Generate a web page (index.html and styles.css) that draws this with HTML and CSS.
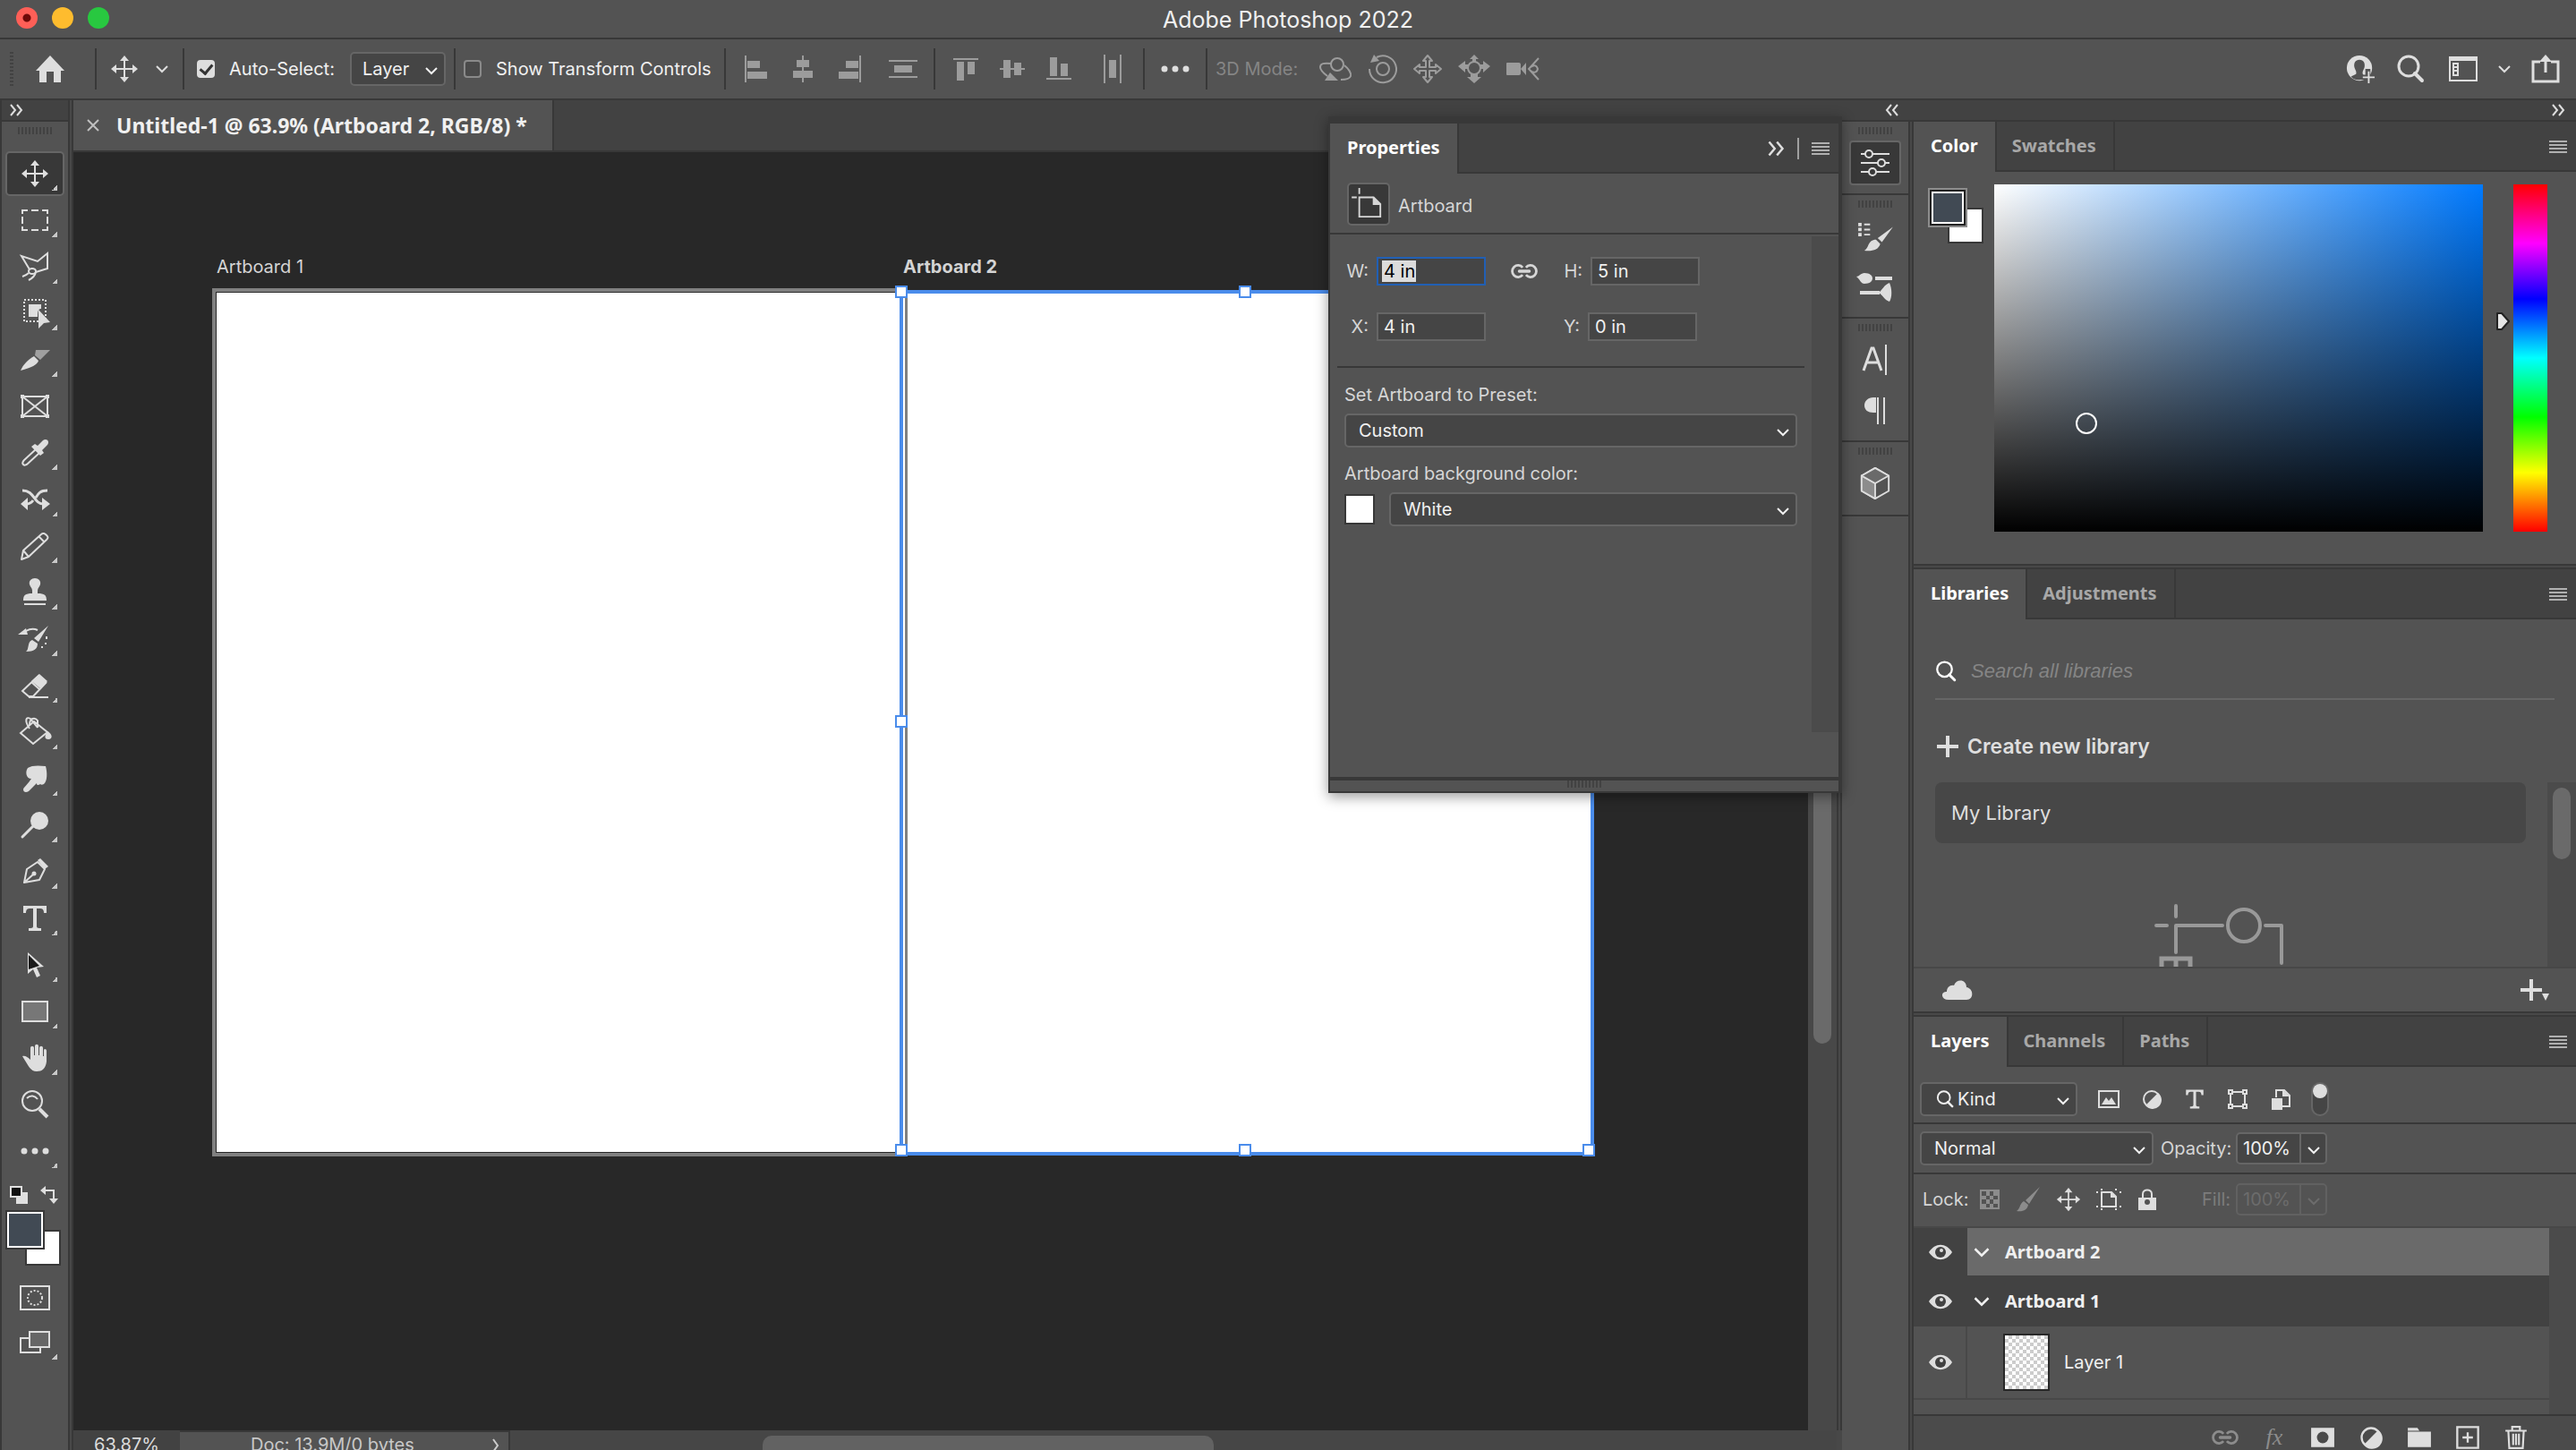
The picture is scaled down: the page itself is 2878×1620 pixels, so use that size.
FILE: index.html
```html
<!DOCTYPE html>
<html lang="en">
<head>
<meta charset="utf-8">
<title>Adobe Photoshop 2022</title>
<link rel="stylesheet" href="styles.css">
</head>
<body>
<svg class="sprite" aria-hidden="true">
  <symbol id="i-chevron" viewBox="0 0 16 16"><path d="M2 5l6 6 6-6" fill="none" stroke="currentColor" stroke-width="2"/></symbol>
  <symbol id="i-more" viewBox="0 0 16 16"><path d="M2 2l5 6-5 6M9 2l5 6-5 6" fill="none" stroke="currentColor" stroke-width="2"/></symbol>
  <symbol id="i-less" viewBox="0 0 16 16"><path d="M7 2L2 8l5 6M14 2L9 8l5 6" fill="none" stroke="currentColor" stroke-width="2"/></symbol>
  <symbol id="i-menu" viewBox="0 0 20 14"><path d="M0 1h20M0 5h20M0 9h20M0 13h20" stroke="currentColor" stroke-width="2"/></symbol>
  <symbol id="i-home" viewBox="0 0 36 32"><path d="M18 1L34 18h-4v13h-8V19h-8v12H6V18H2z" fill="currentColor"/></symbol>
  <symbol id="i-move" viewBox="0 0 32 32"><path d="M16 1l5 6h-4v8h8v-4l6 5-6 5v-4h-8v8h4l-5 6-5-6h4v-8H7v4l-6-5 6-5v4h8V7h-4z" fill="currentColor"/></symbol>
  <symbol id="i-dots" viewBox="0 0 32 32"><g fill="currentColor"><circle cx="4" cy="16" r="3.5"/><circle cx="16" cy="16" r="3.5"/><circle cx="28" cy="16" r="3.5"/></g></symbol>
  <symbol id="i-search" viewBox="0 0 32 32"><g fill="none" stroke="currentColor"><circle cx="14" cy="13" r="11" stroke-width="3"/><path d="M21 21l8 8" stroke-width="4" stroke-linecap="round"/></g></symbol>
  <symbol id="i-plus" viewBox="0 0 24 24"><path d="M12 0v24M0 12h24" stroke="currentColor" stroke-width="4"/></symbol>
  <symbol id="i-link" viewBox="0 0 32 20"><g fill="none" stroke="currentColor" stroke-width="3"><path d="M14 5.500A7 7 0 1 0 14 14.500M18 5.500A7 7 0 1 1 18 14.500"/><path d="M10 10h12" stroke-width="3.500" stroke-linecap="round"/></g></symbol>

  <symbol id="i-al" viewBox="0 0 32 32"><g fill="currentColor"><path d="M3 1h2v30H3zM6 7h14v8H6zM6 19h22v8H6z"/></g></symbol>
  <symbol id="i-ac" viewBox="0 0 32 32"><path fill="currentColor" d="M15 1h2v30h-2zM9 6h14v8H9zM5 18h22v8H5z"/></symbol>
  <symbol id="i-ar" viewBox="0 0 32 32"><path fill="currentColor" d="M27 1h2v30h-2zM12 7h14v8H12zM4 19h22v8H4z"/></symbol>
  <symbol id="i-dv" viewBox="0 0 32 32"><path fill="currentColor" d="M0 6h32v2H0zM6 12h20v8H6zM0 24h32v2H0z"/></symbol>
  <symbol id="i-at" viewBox="0 0 32 32"><path fill="currentColor" d="M2 4h28v2H2zM6 8h8v21H6zM18 8h8v14h-8z"/></symbol>
  <symbol id="i-am" viewBox="0 0 32 32"><path fill="currentColor" d="M2 15h28v2H2zM6 6h8v20H6zM18 9h8v14h-8z"/></symbol>
  <symbol id="i-ab" viewBox="0 0 32 32"><path fill="currentColor" d="M2 26h28v2H2zM6 3h8v21H6zM18 10h8v14h-8z"/></symbol>
  <symbol id="i-dh" viewBox="0 0 32 32"><path fill="currentColor" d="M6 0h2v32H6zM12 6h8v20h-8zM24 0h2v32h-2z"/></symbol>

  <symbol id="i-orbit" viewBox="0 0 36 32"><g fill="none" stroke="currentColor" stroke-width="2"><circle cx="19" cy="11" r="7"/><path d="M12 10C4 9 0 10 0 14c0 4 4 7 8 10M27 12c5 4 8 9 7 12-1 3-5 4-11 4"/></g><path d="M5 29l6-9 9 9z" fill="currentColor"/></symbol>
  <symbol id="i-roll" viewBox="0 0 32 32"><g fill="none" stroke="currentColor" stroke-width="2"><circle cx="16" cy="16" r="7"/><path d="M9 3A15 15 0 1 1 1 16"/></g><path d="M2 9L6 0l6 7z" fill="currentColor"/></symbol>
  <symbol id="i-pan" viewBox="0 0 32 32"><path d="M16 1l5 6h-3v7h7v-3l6 5-6 5v-3h-7v7h3l-5 6-5-6h3v-7H7v3l-6-5 6-5v3h7V7h-3z" fill="none" stroke="currentColor" stroke-width="2" stroke-linejoin="round"/></symbol>
  <symbol id="i-slide" viewBox="0 0 36 32"><g fill="currentColor"><path d="M18 0l5 5h-3v5h-4V5h-3zM0 13l8-6v4h5v5H8v4zM36 13l-8-6v4h-5v5h5v4zM18 32l-8-7h4v-6h8v6h4z"/></g><circle cx="18" cy="15" r="7" fill="#535353" stroke="currentColor" stroke-width="2"/></symbol>
  <symbol id="i-cam" viewBox="0 0 36 32"><path d="M1 9h13q2 0 2 2v10q0 2-2 2H1q-1 0-1-1V10q0-1 1-1zM16 16l6-7v14z" fill="currentColor"/><path d="M36 4L25 16l11 12M27 14c4-3 7-2 8 2-1 4-4 5-8 2" fill="none" stroke="currentColor" stroke-width="2"/></symbol>

  <symbol id="i-user" viewBox="0 0 36 34"><circle cx="17" cy="16" r="15" fill="currentColor"/><path d="M17 6c-5 0-7 4-6 9 1 4 3 5 2 8l-6 3c3 4 7 4 10 4 3 0 5 0 7-2l-3-5c-1-3 1-4 2-8 1-5-1-9-6-9z" fill="#535353"/><path d="M27 17v18M19 27h18" stroke="#535353" stroke-width="6"/><path d="M28 20v14M21 27h14" stroke="currentColor" stroke-width="2"/></symbol>
  <symbol id="i-work" viewBox="0 0 32 32"><path d="M1 3h30v26H1z" fill="none" stroke="currentColor" stroke-width="2"/><path d="M0 2h32v5H0z" fill="currentColor"/><path d="M5 10h5v13H5z" fill="none" stroke="currentColor" stroke-width="2"/><path d="M5 14h5M5 18h5" stroke="currentColor" stroke-width="2"/></symbol>
  <symbol id="i-share" viewBox="0 0 32 32"><path d="M10 8H2v22h28V8h-8" fill="none" stroke="currentColor" stroke-width="3"/><path d="M16 20V5" stroke="currentColor" stroke-width="3"/><path d="M9 8l7-8 7 8z" fill="currentColor"/></symbol>

  <symbol id="t-marquee" viewBox="0 0 32 32"><path d="M2 9V5h6M12 5h8M24 5h6v4M30 12v8M30 23v4h-6M20 27h-8M8 27H2v-4M2 20v-8" fill="none" stroke="currentColor" stroke-width="2"/></symbol>
  <symbol id="t-lasso" viewBox="0 0 32 32"><g fill="none" stroke="currentColor" stroke-width="2"><path d="M10 19L1 4l18 6L30 1v17l-13 4"/><ellipse cx="13" cy="21" rx="4" ry="3"/><path d="M9 23c-2 2-4 3-7 4M17 22c-1 5-4 7-8 9"/></g></symbol>
  <symbol id="t-object" viewBox="0 0 32 32"><path d="M4 1h24v24H4z" fill="none" stroke="currentColor" stroke-width="2" stroke-dasharray="2 2"/><path d="M9 6h14v5c-3 0-4 2-4 9H9z" fill="currentColor"/><path d="M20 12l13 14-7 1-6 6z" fill="currentColor"/></symbol>
  <symbol id="t-slice" viewBox="0 0 32 32"><path d="M0 28C3 21 8 16 15 12l5 5c-1 4-8 8-20 11z" fill="currentColor"/><path d="M17 5h16L22 16l-6-5z" fill="#a0a0a0"/></symbol>
  <symbol id="t-frame" viewBox="0 0 32 32"><path d="M2 5h28v22H2zM2 5l28 22M30 5L2 27" fill="none" stroke="currentColor" stroke-width="2"/><path d="M0 3h4v4H0zM28 3h4v4h-4zM0 25h4v4H0zM28 25h4v4h-4z" fill="currentColor"/></symbol>
  <symbol id="t-dropper" viewBox="0 0 32 32"><path d="M17 12L4 24c-2 2-2 4-1 5s3 1 5-1l13-12" fill="none" stroke="currentColor" stroke-width="2"/><path d="M12 9l4-3 3 2 6-6c4-3 8 1 5 5l-6 6 2 3-4 3z" fill="currentColor"/></symbol>
  <symbol id="t-shuffle" viewBox="0 0 32 32"><path d="M2 6c14 0 12 15 24 15M30 6c-8 0-10 3-13 8M14 17c-2 3-4 4-8 4" fill="none" stroke="currentColor" stroke-width="3"/><path d="M24 14l9 7-9 7zM8 14l-8 7 8 7z" fill="currentColor"/></symbol>
  <symbol id="t-pencil" viewBox="0 0 32 32"><path d="M3 21L23 3c2-2 4-1 6 1 2 2 2 3 0 5L9 28l-8 3zM3 21l6 7M20 5l7 7" fill="none" stroke="currentColor" stroke-width="2" stroke-linejoin="round"/></symbol>
  <symbol id="t-stamp" viewBox="0 0 32 32"><path d="M16 0c4 0 7 3 6 7-1 3-3 4-3 7v3c8 0 10 2 10 8H3c0-6 2-8 10-8v-3c0-3-2-4-3-7-1-4 2-7 6-7zM4 28h24v2H4z" fill="currentColor"/></symbol>
  <symbol id="t-history" viewBox="0 0 32 32"><path d="M31 1L20 19l-5-4zM13 17l6 4c0 6-4 9-13 9 4-3 1-11 7-13zM-3 11l9-7 2 7z" fill="currentColor"/><path d="M6 7c5-3 9-3 13-1" fill="none" stroke="currentColor" stroke-width="2"/><path d="M28 13h2v3h-2zM27 20h2v2h-2zM23 24h2v2h-2z" fill="currentColor"/></symbol>
  <symbol id="t-eraser" viewBox="0 0 32 32"><path d="M21 3l9 8-8 8-10-8z" fill="currentColor"/><path d="M21 4L2 22l7 6h5L29 12M12 12l9 8M9 29h22" fill="none" stroke="currentColor" stroke-width="2"/></symbol>
  <symbol id="t-bucket" viewBox="0 0 36 32"><path d="M2 17L17 4l15 12-16 13zM12 12C6 3 8-2 13 1l8 10M12 8C12 0 18-1 21 3v8" fill="none" stroke="currentColor" stroke-width="2"/><path d="M32 15c6 3 6 9 1 9-4 0-5-3-1-9z" fill="currentColor"/></symbol>
  <symbol id="t-smudge" viewBox="0 0 32 32"><path d="M8 4c4-3 12-3 20-2 2 7 2 17-2 20-2 1-3 1-4 0-3 2-4 1-4-1L9 30c-3 2-6 1-6-2 0-2 6-7 9-12-6 0-7-8-4-12z" fill="currentColor"/></symbol>
  <symbol id="t-dodge" viewBox="0 0 32 32"><ellipse cx="21" cy="11" rx="10" ry="10" fill="currentColor"/><path d="M14 17L2 29" stroke="currentColor" stroke-width="3" stroke-linecap="round"/></symbol>
  <symbol id="t-pen" viewBox="0 0 32 32"><path d="M4 28L7 13 19 5l8 8-6 12zM4 28l10-9" fill="none" stroke="currentColor" stroke-width="2" stroke-linejoin="round"/><circle cx="15" cy="18" r="2.500" fill="currentColor"/><path d="M19 3l3-2 9 9-4 3z" fill="currentColor"/></symbol>
  <symbol id="t-type" viewBox="0 0 32 32"><path d="M3 2h26v8h-3c0-3-1-5-4-5h-4v20c0 2 2 2 5 2v3H9v-3c3 0 5 0 5-2V5h-4c-3 0-4 2-4 5H3z" fill="currentColor"/></symbol>
  <symbol id="t-path" viewBox="0 0 32 32"><path d="M8 2l18 16-8 1 4 9-4 2-4-9-6 5z" fill="#e0e0e0"/><path d="M9 5v16l12-4z" fill="#1a1a1a"/></symbol>
  <symbol id="t-rect" viewBox="0 0 32 32"><path d="M2 5h28v22H2z" fill="#777" stroke="currentColor" stroke-width="2"/></symbol>
  <symbol id="t-hand" viewBox="0 0 32 32"><path d="M2 14c3-1 6 1 9 4V5c0-3 4-3 4 0v8h1V3c0-3 4-3 4 0v10h1V5c0-3 4-3 4 0v9h1V8c0-3 3-2 3 0v12c-1 8-5 11-11 11-7 0-9-6-16-17z" fill="currentColor"/></symbol>
  <symbol id="t-zoom" viewBox="0 0 32 32"><g fill="none" stroke="currentColor"><circle cx="13" cy="12" r="11" stroke-width="2"/><path d="M7 9c4-4 9-3 12 1" stroke-width="2"/><path d="M21 21l9 9" stroke-width="4"/></g></symbol>
  <symbol id="t-default" viewBox="0 0 20 20"><path d="M7 7h13v13H7z" fill="#e0e0e0"/><path d="M1 1h12v11H1z" fill="#111" stroke="#e0e0e0" stroke-width="2"/></symbol>
  <symbol id="t-swap" viewBox="0 0 20 20"><path d="M5 5h10v11" fill="none" stroke="currentColor" stroke-width="2"/><path d="M0 5l6-5v10zM15 20l-5-6h10z" fill="currentColor"/></symbol>
  <symbol id="t-mask" viewBox="0 0 34 28"><path d="M1 1h32v26H1z" fill="none" stroke="currentColor" stroke-width="2"/><circle cx="17" cy="14" r="8" fill="none" stroke="currentColor" stroke-width="2" stroke-dasharray="2 2"/></symbol>
  <symbol id="t-screen" viewBox="0 0 34 28"><path d="M1 9h22v16H1z" fill="#535353" stroke="currentColor" stroke-width="2"/><path d="M11 2h22v17H11z" fill="#666" stroke="currentColor" stroke-width="2"/></symbol>

  <symbol id="d-props" viewBox="0 0 32 32"><path d="M0 6h32M0 16h32M0 26h32" stroke="currentColor" stroke-width="2"/><g fill="#383838" stroke="currentColor" stroke-width="2"><circle cx="9" cy="6" r="4"/><circle cx="23" cy="16" r="4"/><circle cx="13" cy="26" r="4"/></g></symbol>
  <symbol id="d-brushes" viewBox="0 0 40 36"><path d="M0 2h4v4H0zM0 8h4v4H0zM0 14h4v4H0zM7 3h7v2H7zM7 9h7v2H7zM7 15h7v2H7z" fill="currentColor"/><path d="M41 7L28 25l-5-5zM21 22l5 5c-2 7-9 9-19 8 6-3 4-13 14-13z" fill="currentColor"/></symbol>
  <symbol id="d-brushset" viewBox="0 0 40 34"><path d="M-1 5c3 0 5-4 9-4 6 0 9 3 9 6s-3 6-9 6C4 13 3 8-1 5zM20 5h19v4H20zM3 21h22v4H3zM24 23c4-3 6-9 12-11 3 7 3 16 0 21-6-2-8-8-12-10z" fill="currentColor"/></symbol>
  <symbol id="d-char" viewBox="0 0 32 36"><path d="M3 30L12 5h2l9 25M7 21h12" fill="none" stroke="currentColor" stroke-width="3"/><path d="M28 1v34" stroke="currentColor" stroke-width="2"/></symbol>
  <symbol id="d-para" viewBox="0 0 32 32"><path d="M27 1H14c-6 0-10 4-10 9s4 8 10 8h3V1" fill="currentColor"/><path d="M19 1v30M26 1v30" stroke="currentColor" stroke-width="2"/></symbol>
  <symbol id="d-cube" viewBox="0 0 34 38"><g stroke="currentColor" stroke-width="2" stroke-linejoin="round"><path d="M17 1l16 9v18L17 37 1 28V10z" fill="#535353"/><path d="M1 10l16 9v18L1 28z" fill="#8c8c8c"/><path d="M1 10l16-9 16 9-16 9z" fill="#6a6a6a"/></g></symbol>

  <symbol id="p-artboard" viewBox="0 0 36 34"><path d="M7 9h17l8 8v15H7zM7 -2v7M-2 9h6" fill="none" stroke="currentColor" stroke-width="2"/><path d="M23 8v10h10z" fill="currentColor"/></symbol>
  <symbol id="l-cloud" viewBox="0 0 34 22"><path d="M7 22C-2 22-2 12 5 13c0-5 4-8 8-7 3-8 14-7 14 2 8 1 9 14 0 14z" fill="currentColor"/></symbol>
  <symbol id="l-art" viewBox="0 0 146 70"><g fill="none" stroke="#999" stroke-width="4" stroke-linecap="round" stroke-linejoin="round"><path d="M24 2v12M2 24h12M24 54V24h52M124 24h18v42"/><circle cx="100" cy="24" r="18"/></g><path d="M8 70V61h32v9M24 61v9" fill="none" stroke="#999" stroke-width="5"/></symbol>

  <symbol id="k-image" viewBox="0 0 24 24"><path d="M1 3h22v18H1z" fill="none" stroke="currentColor" stroke-width="2"/><path d="M4 18l5-8 3 4 3-4 5 8z" fill="currentColor"/></symbol>
  <symbol id="k-adjust" viewBox="0 0 24 24"><circle cx="12" cy="12" r="9" fill="none" stroke="currentColor" stroke-width="2"/><path d="M19 5A10 10 0 1 1 5 19z" fill="currentColor"/></symbol>
  <symbol id="k-shape" viewBox="0 0 24 24"><path d="M4 4h16v16H4z" fill="none" stroke="currentColor" stroke-width="2"/><g fill="#535353" stroke="currentColor" stroke-width="2"><path d="M2 2h4v4H2zM18 2h4v4h-4zM2 18h4v4H2zM18 18h4v4h-4z"/></g></symbol>
  <symbol id="k-smart" viewBox="0 0 24 24"><path d="M7 10V2h9l6 6v12h-8" fill="none" stroke="currentColor" stroke-width="2"/><path d="M2 11h12v13H2zM14 1v8h8z" fill="currentColor"/></symbol>
  <symbol id="k-checker" viewBox="0 0 24 24"><path d="M2 2h20v20H2z" fill="none" stroke="currentColor" stroke-width="2"/><path d="M8 3h4v5H8zM16 3h5v5h-5zM3 8h5v4H3zM12 8h4v4h-4zM8 12h4v5H8zM16 12h5v5h-5zM3 17h5v4H3zM12 17h4v4h-4z" fill="currentColor"/></symbol>
  <symbol id="k-brush" viewBox="0 0 28 28"><path d="M27 0L15 19l-4-4zM9 16l5 4c-1 6-6 8-13 7 4-2 3-8 8-11z" fill="currentColor"/></symbol>
  <symbol id="k-artboard" viewBox="0 0 28 24"><path d="M6 4h11l5 5v11H6z" fill="none" stroke="currentColor" stroke-width="2"/><path d="M16 3v7h7zM0 3h2v2H0zM5 0h2v2H5zM21 0h2v2h-2zM26 3h2v2h-2zM0 19h2v2H0zM5 22h2v2H5zM21 22h2v2h-2zM26 19h2v2h-2z" fill="currentColor"/></symbol>
  <symbol id="k-lock" viewBox="0 0 24 24"><path d="M2 10h20v14H2z" fill="currentColor"/><path d="M7 11V6c0-6 10-6 10 0v5" fill="none" stroke="currentColor" stroke-width="2"/><circle cx="12" cy="15" r="3" fill="#535353"/></symbol>
  <symbol id="k-eye" viewBox="0 0 26 16"><path d="M0 8C7-3 19-3 26 8 19 19 7 19 0 8z" fill="currentColor"/><circle cx="13" cy="8" r="6" fill="#424242"/><circle cx="14" cy="6" r="2" fill="currentColor"/></symbol>
  <symbol id="k-mask" viewBox="0 0 26 24"><path d="M1 2h24v20H1z" fill="currentColor"/><circle cx="13" cy="12" r="6" fill="#4a4a4a"/></symbol>
  <symbol id="k-folder" viewBox="0 0 26 24"><path d="M1 2h10l2 3h-12zM1 6h24v16H1z" fill="currentColor"/></symbol>
  <symbol id="k-new" viewBox="0 0 24 24"><path d="M2 2h20v20H2zM12 7v10M7 12h10" fill="none" stroke="currentColor" stroke-width="2"/></symbol>
  <symbol id="k-trash" viewBox="0 0 24 26"><path d="M1 6h22M8 6V2h8v4M4 6l1 18h14l1-18M9 9v12M12 9v12M15 9v12" fill="none" stroke="currentColor" stroke-width="2"/></symbol>
</svg>

<div class="app">
  <header class="titlebar">
    <div class="lights"><button class="light red" aria-label="Close"></button><button class="light yellow" aria-label="Minimize"></button><button class="light green" aria-label="Zoom"></button></div>
    <h1 class="title">Adobe Photoshop 2022</h1>
    <div></div>
  </header>

  <div class="options">
    <span class="vgrip"></span>
    <button class="btn home" aria-label="Home"><svg class="w36"><use href="#i-home"/></svg></button>
    <span class="sep s-home"></span>
    <button class="btn movetool" aria-label="Move tool"><svg class="w32"><use href="#i-move"/></svg><svg class="w16"><use href="#i-chevron"/></svg></button>
    <span class="sep s-move"></span>
    <label class="check auto"><input type="checkbox" checked><span>Auto-Select:</span></label>
    <div class="select sel-layer"><select aria-label="Auto-select target"><option>Layer</option></select><svg class="w16"><use href="#i-chevron"/></svg></div>
    <span class="sep s-select"></span>
    <label class="check show"><input type="checkbox"><span>Show Transform Controls</span></label>
    <span class="sep"></span>
    <div class="aligns">
      <button class="btn" aria-label="Align left"><svg class="w32"><use href="#i-al"/></svg></button>
      <button class="btn" aria-label="Align centers"><svg class="w32"><use href="#i-ac"/></svg></button>
      <button class="btn" aria-label="Align right"><svg class="w32"><use href="#i-ar"/></svg></button>
      <button class="btn dist" aria-label="Distribute vertically"><svg class="w32"><use href="#i-dv"/></svg></button>
    </div>
    <span class="sep"></span>
    <div class="aligns">
      <button class="btn" aria-label="Align top"><svg class="w32"><use href="#i-at"/></svg></button>
      <button class="btn" aria-label="Align middle"><svg class="w32"><use href="#i-am"/></svg></button>
      <button class="btn" aria-label="Align bottom"><svg class="w32"><use href="#i-ab"/></svg></button>
      <button class="btn dist" aria-label="Distribute horizontally"><svg class="w32"><use href="#i-dh"/></svg></button>
    </div>
    <span class="sep"></span>
    <button class="btn moreopts" aria-label="More options"><svg class="w32"><use href="#i-dots"/></svg></button>
    <span class="sep"></span>
    <span class="mode3d">3D Mode:</span>
    <div class="aligns threed">
      <button class="btn" aria-label="Orbit"><svg class="w36"><use href="#i-orbit"/></svg></button>
      <button class="btn" aria-label="Roll"><svg class="w32"><use href="#i-roll"/></svg></button>
      <button class="btn" aria-label="Pan"><svg class="w32"><use href="#i-pan"/></svg></button>
      <button class="btn" aria-label="Slide"><svg class="w36"><use href="#i-slide"/></svg></button>
      <button class="btn" aria-label="Camera"><svg class="w36"><use href="#i-cam"/></svg></button>
    </div>
    <div class="account">
      <button class="btn" aria-label="Account"><svg class="w36"><use href="#i-user"/></svg></button>
      <button class="btn find" aria-label="Search"><svg class="w32"><use href="#i-search"/></svg></button>
      <button class="btn" aria-label="Workspace"><svg class="w32"><use href="#i-work"/></svg></button>
      <button class="btn" aria-label="Workspace menu"><svg class="w16"><use href="#i-chevron"/></svg></button>
      <button class="btn" aria-label="Share"><svg class="w32"><use href="#i-share"/></svg></button>
    </div>
  </div>

  <main class="main">
    <nav class="tools" aria-label="Tools">
      <div class="dockhead"><button class="btn" aria-label="Expand"><svg class="w16"><use href="#i-more"/></svg></button></div>
      <span class="hgrip"></span>
      <div class="toollist">
        <button class="tool active" aria-label="Move"><svg class="w32"><use href="#i-move"/></svg></button>
        <button class="tool" aria-label="Marquee"><svg class="w32"><use href="#t-marquee"/></svg></button>
        <button class="tool" aria-label="Lasso"><svg class="w32"><use href="#t-lasso"/></svg></button>
        <button class="tool" aria-label="Object selection"><svg class="w32"><use href="#t-object"/></svg></button>
        <button class="tool" aria-label="Slice"><svg class="w32"><use href="#t-slice"/></svg></button>
        <button class="tool plain" aria-label="Frame"><svg class="w32"><use href="#t-frame"/></svg></button>
        <button class="tool" aria-label="Eyedropper"><svg class="w32"><use href="#t-dropper"/></svg></button>
        <button class="tool" aria-label="Content-aware move"><svg class="w32"><use href="#t-shuffle"/></svg></button>
        <button class="tool" aria-label="Pencil"><svg class="w32"><use href="#t-pencil"/></svg></button>
        <button class="tool" aria-label="Clone stamp"><svg class="w32"><use href="#t-stamp"/></svg></button>
        <button class="tool" aria-label="History brush"><svg class="w32"><use href="#t-history"/></svg></button>
        <button class="tool" aria-label="Eraser"><svg class="w32"><use href="#t-eraser"/></svg></button>
        <button class="tool" aria-label="Paint bucket"><svg class="w36"><use href="#t-bucket"/></svg></button>
        <button class="tool" aria-label="Smudge"><svg class="w32"><use href="#t-smudge"/></svg></button>
        <button class="tool" aria-label="Dodge"><svg class="w32"><use href="#t-dodge"/></svg></button>
        <button class="tool" aria-label="Pen"><svg class="w32"><use href="#t-pen"/></svg></button>
        <button class="tool" aria-label="Type"><svg class="w32"><use href="#t-type"/></svg></button>
        <button class="tool" aria-label="Path selection"><svg class="w32"><use href="#t-path"/></svg></button>
        <button class="tool" aria-label="Rectangle"><svg class="w32"><use href="#t-rect"/></svg></button>
        <button class="tool" aria-label="Hand"><svg class="w32"><use href="#t-hand"/></svg></button>
        <button class="tool plain" aria-label="Zoom"><svg class="w32"><use href="#t-zoom"/></svg></button>
        <button class="tool" aria-label="Edit toolbar"><svg class="w32"><use href="#i-dots"/></svg></button>
      </div>
      <div class="colorminis">
        <button class="btn" aria-label="Default colors"><svg class="w20"><use href="#t-default"/></svg></button>
        <button class="btn" aria-label="Swap colors"><svg class="w20"><use href="#t-swap"/></svg></button>
      </div>
      <div class="toolswatch"><span class="bg"></span><span class="fg"></span></div>
      <button class="tool plain" aria-label="Quick mask"><svg class="w34"><use href="#t-mask"/></svg></button>
      <button class="tool" aria-label="Screen mode"><svg class="w34"><use href="#t-screen"/></svg></button>
    </nav>
    <span class="edge"></span>

    <section class="document">
      <div class="doctabs">
        <div class="doctab"><button class="btn closetab" aria-label="Close tab"><svg class="w16"><path d="M2 2l12 12M14 2L2 14" stroke="#c0c0c0" stroke-width="2"/></svg></button><span>Untitled-1 @ 63.9% (Artboard 2, RGB/8) *</span></div>
      </div>
      <div class="docbody">
        <div class="canvas">
          <span class="ablabel one">Artboard 1</span>
          <span class="ablabel two">Artboard 2</span>
          <div class="artboard one"></div>
          <div class="artboard two">
            <i class="handle tl"></i><i class="handle tc"></i><i class="handle tr"></i>
            <i class="handle ml"></i><i class="handle mr"></i>
            <i class="handle bl"></i><i class="handle bc"></i><i class="handle br"></i>
          </div>
        </div>
        <div class="vscroll"><span class="vthumb"></span></div>
        <span class="edge"></span>
      </div>
      <div class="status">
        <span class="zoomlevel">63.87%</span>
        <div class="docinfo"><span>Doc: 13.9M/0 bytes</span><svg class="w16"><path d="M5 2l5 7-5 7" fill="none" stroke="#ccc" stroke-width="2"/></svg></div>
        <span class="hthumb"></span>
      </div>

      <aside class="props">
        <div class="tabs">
          <button class="tab on">Properties</button>
          <span class="tabtools"><button class="btn" aria-label="Collapse"><svg class="w20"><use href="#i-more"/></svg></button><span class="bar"></span><button class="btn" aria-label="Panel menu"><svg class="menu"><use href="#i-menu"/></svg></button></span>
        </div>
        <div class="kindrow"><span class="kindicon"><svg class="w36"><use href="#p-artboard"/></svg></span><span class="kindname">Artboard</span></div>
        <div class="propbody">
          <div class="propform">
            <div class="dims">
              <label for="w">W:</label><input id="w" class="num focus" value="4 in">
              <svg class="link"><use href="#i-link"/></svg>
              <label for="h">H:</label><input id="h" class="num" value="5 in">
            </div>
            <div class="dims pos">
              <label for="x">X:</label><input id="x" class="num" value="4 in">
              <span></span>
              <label for="y">Y:</label><input id="y" class="num" value="0 in">
            </div>
            <hr>
            <label class="lbl" for="preset">Set Artboard to Preset:</label>
            <div class="select"><select id="preset"><option>Custom</option></select><svg class="w16"><use href="#i-chevron"/></svg></div>
            <label class="lbl second" for="bgc">Artboard background color:</label>
            <div class="bgrow"><span class="white"></span><div class="select"><select id="bgc"><option>White</option></select><svg class="w16"><use href="#i-chevron"/></svg></div></div>
          </div>
          <div class="propscroll"></div>
        </div>
        <div class="resize"><span class="hgrip"></span></div>
      </aside>
    </section>

    <section class="right">
      <div class="dockhead wide"><button class="btn" aria-label="Expand dock"><svg class="w16"><use href="#i-less"/></svg></button><button class="btn" aria-label="Collapse panels"><svg class="w16"><use href="#i-more"/></svg></button></div>
      <div class="rightrow">
        <nav class="dock" aria-label="Panels">
          <div class="dgroup"><span class="hgrip"></span><button class="dbtn active" aria-label="Properties"><svg class="w32"><use href="#d-props"/></svg></button></div>
          <div class="dgroup tall"><span class="hgrip"></span><button class="dbtn" aria-label="Brushes"><svg class="w40"><use href="#d-brushes"/></svg></button><button class="dbtn" aria-label="Brush settings"><svg class="w40"><use href="#d-brushset"/></svg></button></div>
          <div class="dgroup mid"><span class="hgrip"></span><button class="dbtn" aria-label="Character"><svg class="w34t"><use href="#d-char"/></svg></button><button class="dbtn" aria-label="Paragraph"><svg class="w32"><use href="#d-para"/></svg></button></div>
          <div class="dgroup low"><span class="hgrip"></span><button class="dbtn" aria-label="3D"><svg class="w34t"><use href="#d-cube"/></svg></button></div>
        </nav>
        <span class="edge"></span>
        <div class="panels">
          <section class="panel">
            <div class="tabs"><button class="tab on">Color</button><button class="tab">Swatches</button><button class="btn pmenu" aria-label="Panel menu"><svg class="menu"><use href="#i-menu"/></svg></button></div>
            <div class="colorbody">
              <div class="pswatch"><span class="bg"></span><span class="fg"></span></div>
              <div class="field"><i class="marker"></i></div>
              <div class="hue"><svg class="huearrow"><path d="M2 2h5l8 9-8 9H2z" fill="#e6e6e6" stroke="#222" stroke-width="2" stroke-linejoin="round"/></svg></div>
            </div>
          </section>
          <span class="split"></span>
          <section class="panel">
            <div class="tabs"><button class="tab on">Libraries</button><button class="tab">Adjustments</button><button class="btn pmenu" aria-label="Panel menu"><svg class="menu"><use href="#i-menu"/></svg></button></div>
            <div class="searchrow"><svg class="w24"><use href="#i-search"/></svg><input type="search" aria-label="Search all libraries" placeholder="Search all libraries"></div>
            <button class="btn create"><svg class="w24"><use href="#i-plus"/></svg><span>Create new library</span></button>
            <div class="librow">
              <div class="liblist"><a class="lib" href="#">My Library</a><svg class="libart"><use href="#l-art"/></svg></div>
              <div class="libscroll"><span></span></div>
            </div>
            <div class="libfoot"><svg class="cloud"><use href="#l-cloud"/></svg><button class="btn add" aria-label="Add"><svg class="w24"><use href="#i-plus"/></svg><svg class="tri"><path d="M0 0h8L4 8z" fill="#e0e0e0"/></svg></button></div>
          </section>
          <span class="split"></span>
          <section class="panel layers">
            <div class="tabs"><button class="tab on">Layers</button><button class="tab">Channels</button><button class="tab">Paths</button><button class="btn pmenu" aria-label="Panel menu"><svg class="menu"><use href="#i-menu"/></svg></button></div>
            <div class="lrow filter">
              <div class="select kind"><svg class="w20 mag"><use href="#i-search"/></svg><select aria-label="Filter kind"><option>Kind</option></select><svg class="w16"><use href="#i-chevron"/></svg></div>
              <div class="kicons">
                <button class="btn" aria-label="Pixel"><svg class="w24"><use href="#k-image"/></svg></button>
                <button class="btn" aria-label="Adjustment"><svg class="w24"><use href="#k-adjust"/></svg></button>
                <button class="btn" aria-label="Type"><svg class="w24"><use href="#t-type"/></svg></button>
                <button class="btn" aria-label="Shape"><svg class="w24"><use href="#k-shape"/></svg></button>
                <button class="btn" aria-label="Smart object"><svg class="w24"><use href="#k-smart"/></svg></button>
              </div>
              <button class="toggle" aria-label="Filter on"><span></span></button>
            </div>
            <div class="lrow blend">
              <div class="select mode"><select aria-label="Blend mode"><option>Normal</option></select><svg class="w16"><use href="#i-chevron"/></svg></div>
              <label class="plabel" for="op">Opacity:</label>
              <div class="pct"><input id="op" value="100%"><button aria-label="Opacity slider"><svg class="w16"><use href="#i-chevron"/></svg></button></div>
            </div>
            <div class="lrow locks">
              <span class="locklabel">Lock:</span>
              <div class="lockicons">
                <button class="btn dim" aria-label="Lock transparency"><svg class="w24"><use href="#k-checker"/></svg></button>
                <button class="btn dim" aria-label="Lock pixels"><svg class="w28"><use href="#k-brush"/></svg></button>
                <button class="btn" aria-label="Lock position"><svg class="w28"><use href="#i-move"/></svg></button>
                <button class="btn" aria-label="Lock nesting"><svg class="w28"><use href="#k-artboard"/></svg></button>
                <button class="btn" aria-label="Lock all"><svg class="w24"><use href="#k-lock"/></svg></button>
              </div>
              <label class="plabel fill" for="fi">Fill:</label>
              <div class="pct off"><input id="fi" value="100%" disabled><button aria-label="Fill slider" disabled><svg class="w16"><use href="#i-chevron"/></svg></button></div>
            </div>
            <div class="stack">
              <ul class="layerlist">
                <li class="layer group sel"><button class="eye" aria-label="Visible"><svg><use href="#k-eye"/></svg></button><div class="lname"><svg class="w20"><use href="#i-chevron"/></svg><span>Artboard 2</span></div></li>
                <li class="layer group"><button class="eye" aria-label="Visible"><svg><use href="#k-eye"/></svg></button><div class="lname"><svg class="w20"><use href="#i-chevron"/></svg><span>Artboard 1</span></div></li>
                <li class="layer leaf"><button class="eye" aria-label="Visible"><svg><use href="#k-eye"/></svg></button><div class="lname"><span class="thumb"></span><span>Layer 1</span></div></li>
              </ul>
              <div class="stackscroll"></div>
            </div>
            <div class="layerfoot">
              <button class="btn dim" aria-label="Link layers"><svg class="link"><use href="#i-link"/></svg></button>
              <button class="btn dim fx">fx</button>
              <button class="btn" aria-label="Add mask"><svg class="w28"><use href="#k-mask"/></svg></button>
              <button class="btn" aria-label="Adjustment layer"><svg class="w28"><use href="#k-adjust"/></svg></button>
              <button class="btn" aria-label="New group"><svg class="w28"><use href="#k-folder"/></svg></button>
              <button class="btn" aria-label="New layer"><svg class="w28"><use href="#k-new"/></svg></button>
              <button class="btn" aria-label="Delete"><svg class="w28"><use href="#k-trash"/></svg></button>
            </div>
          </section>
        </div>
      </div>
    </section>
  </main>
</div>
</body>
</html>
```

FILE: styles.css
```css
* { box-sizing: border-box; }
:root {
  --panel: #535353;
  --dark: #424242;
  --line: #383838;
  --field: #454545;
  --rim: #666;
  --ink: #f0f0f0;
  --icon: #dedede;
}
body { margin: 0; background: #383838; color: var(--ink); font: 20px/24px Inter, "Liberation Sans", sans-serif; }
button, input, select { font: inherit; color: inherit; margin: 0; }
svg { display: block; flex: none; overflow: visible; }
.sprite { position: absolute; width: 0; height: 0; overflow: hidden; }
symbol { overflow: visible; }
.btn { display: flex; align-items: center; padding: 0; border: 0; background: none; color: var(--icon); }
.w16 { width: 16px; height: 16px; }
.w20 { width: 20px; height: 20px; }
.w24 { width: 24px; height: 24px; }
.w28 { width: 28px; height: 28px; }
.w32 { width: 32px; height: 32px; }
.w34 { width: 34px; height: 28px; }
.w34t { width: 34px; height: 36px; }
.w36 { width: 36px; height: 32px; }
.w40 { width: 40px; height: 34px; }
.menu { width: 20px; height: 14px; color: #b0b0b0; }
.link { width: 30px; height: 20px; }

.app { display: flex; flex-direction: column; height: 100vh; overflow: hidden; }
.titlebar { display: grid; grid-template-columns: 1fr auto 1fr; align-items: center; height: 44px; flex: none; background: var(--panel); border-bottom: 2px solid var(--line); }
.lights { display: flex; gap: 16px; padding: 0 0 2px 18px; }
.light { width: 24px; height: 24px; padding: 0; border: 0; border-radius: 50%; }
.red { background: radial-gradient(circle, #6e0a08 0 4px, #fe5f57 5px); }
.yellow { background: #febc2e; }
.green { background: #28c840; }
.title { margin: 0; padding-top: 2px; font-size: 25px; line-height: 32px; font-weight: 400; }

.options { display: flex; align-items: center; height: 68px; flex: none; padding: 0 18px 0 11px; background: var(--panel); border-bottom: 2px solid var(--line); }
.vgrip { width: 4px; height: 38px; background: repeating-linear-gradient(#424242 0 2px, transparent 2px 4px); }
.hgrip { display: block; width: 38px; height: 8px; flex: none; background: repeating-linear-gradient(90deg, #424242 0 2px, transparent 2px 4px); }
.home { margin-left: 23px; }
.sep { width: 2px; height: 46px; background: var(--line); flex: none; }
.s-home { margin-left: 32px; }
.movetool { gap: 18px; margin-left: 15px; }
.s-move { margin-left: 15px; }
.check { display: flex; align-items: center; gap: 16px; white-space: nowrap; }
.check input { appearance: none; width: 20px; height: 20px; border: 2px solid #8a8a8a; border-radius: 4px; background: #4a4a4a; display: grid; place-items: center; }
.check input:checked { background: #dedede; border-color: #dedede; }
.check input:checked::after { content: ""; width: 6px; height: 11px; margin-bottom: 3px; border: solid #333; border-width: 0 3px 3px 0; transform: rotate(40deg); }
.auto { width: 171px; margin-left: 14px; }
.show { width: 291px; }
.s-select { margin: 0 9px; }
.select { display: grid; align-items: center; height: 38px; border: 2px solid var(--rim); border-radius: 5px; background: var(--field); }
.select select, .select .w16, .select .mag { grid-area: 1 / 1; }
.select select { appearance: none; width: 100%; height: 34px; padding: 0 32px 0 14px; border: 0; background: none; outline: 0; }
.select .w16 { justify-self: end; margin: 3px 6px 0 0; pointer-events: none; }
.sel-layer { width: 107px; }
.sel-layer select { padding-left: 12px; }
.aligns { display: flex; gap: 20px; margin: 0 18px; }
.aligns .btn { color: #9c9c9c; }
.dist { margin-left: 8px; }
.moreopts { margin: 0 18px; }
.mode3d { width: 109px; margin-left: 9px; color: #858585; }
.threed { gap: 18px; margin: 0 0 0 8px; }
.account { display: flex; align-items: center; gap: 22px; margin-left: auto; }
.find { margin-right: 5px; }

.main { display: flex; flex: 1; min-height: 0; }
.edge { width: 6px; flex: none; background: #484848; border: solid var(--line); border-width: 0 2px; }
.tools { display: flex; flex-direction: column; align-items: center; width: 76px; flex: none; border-left: 2px solid var(--line); background: var(--panel); }
.dockhead { display: flex; align-items: center; height: 24px; width: 100%; flex: none; padding: 0 8px; background: var(--dark); border-bottom: 2px solid var(--line); }
.dockhead.wide { justify-content: space-between; padding: 0 12px 0 48px; }
.tools .hgrip { margin: 6px 0 19px; }
.toollist { display: flex; flex-direction: column; gap: 2px; }
.tool { display: grid; place-items: center; width: 66px; height: 50px; flex: none; padding: 0; border: 2px solid transparent; border-radius: 5px; color: var(--icon); background: linear-gradient(135deg, transparent 50%, #c8c8c8 50%) 50px 36px / 6px 6px no-repeat; }
.tool.active { background-color: var(--line); border-color: var(--rim); }
.tool.plain { background: none; }
.colorminis { display: flex; gap: 14px; margin: 14px 2px 9px 0; }
.toolswatch, .pswatch { display: grid; grid-template: repeat(3, 20px) / repeat(3, 20px); flex: none; }
.toolswatch { margin: 0 2px 11px 0; }
.toolswatch .bg { grid-area: 2 / 2 / 4 / 4; background: #fff; border: 2px solid var(--line); }
.toolswatch .fg { grid-area: 1 / 1 / 3 / 3; background: #414a54; border: 2px solid #fff; box-shadow: 0 0 0 2px var(--line); }

.document { position: relative; display: flex; flex-direction: column; flex: 1; min-width: 0; }
.doctabs { display: flex; height: 58px; flex: none; background: var(--dark); border-bottom: 2px solid var(--line); }
.doctab { display: flex; align-items: center; gap: 18px; padding: 0 28px 0 14px; background: var(--panel); border-right: 2px solid var(--line); font: bold 23px/24px "Noto Sans", sans-serif; }
.docbody { display: flex; flex: 1; min-height: 0; }
.canvas { position: relative; flex: 1; min-width: 0; overflow: hidden; background: #282828; }
.ablabel { position: absolute; top: 116px; color: #d4d4d4; }
.ablabel.one { left: 160px; }
.ablabel.two { left: 927px; font-weight: 700; }
.artboard { position: absolute; background: #fff; }
.artboard.one { left: 155px; top: 152px; width: 776px; height: 970px; border: 4px solid #808080; box-shadow: inset 0 0 0 1px #282828; }
.artboard.two { left: 923px; top: 154px; width: 776px; height: 967px; border: 4px solid #4a8ceb; background: linear-gradient(90deg, #fff 2px, #808080 2px 5px, #fff 5px); }
.handle { position: absolute; width: 14px; height: 14px; margin: -9px; background: #fff; border: 2px solid #4a8ceb; }
.tl, .tc, .tr { top: 0; }
.ml, .mr { top: 50%; }
.bl, .bc, .br { top: 100%; }
.tl, .ml, .bl { left: 0; }
.tc, .bc { left: 50%; }
.tr, .mr, .br { left: 100%; }
.vscroll { width: 32px; flex: none; padding: 540px 6px 0; background: #484848; }
.vthumb { display: block; height: 456px; border-radius: 10px; background: #6a6a6a; }
.status { display: flex; height: 22px; flex: none; overflow: hidden; background: #464646; border-right: 6px solid #484848; line-height: 32px; color: #dcdcdc; }
.zoomlevel { width: 119px; padding-left: 23px; background: var(--dark); flex: none; }
.docinfo { display: flex; justify-content: space-between; width: 369px; flex: none; height: 32px; padding: 0 6px 0 79px; background: var(--panel); border: solid var(--line); border-width: 2px 2px 0 0; line-height: 29px; color: #c8c8c8; }
.docinfo svg { margin-top: 6px; }
.hthumb { width: 504px; height: 30px; margin: 6px 0 0 282px; border-radius: 10px; background: #626262; flex: none; }

.props { position: absolute; top: 18px; right: 0; width: 574px; border: solid var(--line); border-width: 8px 4px 2px 2px; background: var(--panel); box-shadow: 0 4px 14px rgba(0, 0, 0, .4); color: #d6d6d6; }
.tabs { display: flex; height: 56px; flex: none; background: linear-gradient(var(--dark) 54px, var(--line) 54px); font: bold 20px/24px "Noto Sans", sans-serif; }
.tab { padding: 0 19px 3px 17px; border: 0; border-right: 2px solid var(--line); background: none; color: #a8a8a8; }
.tab.on { padding-left: 19px; background: var(--panel); color: #fff; }
.tabtools { display: flex; align-items: center; gap: 14px; margin-left: auto; padding-right: 10px; }
.bar { width: 2px; height: 24px; background: #a0a0a0; }
.pmenu { margin: 0 10px 0 auto; }
.kindrow { display: flex; align-items: center; gap: 9px; height: 68px; padding: 2px 0 0 19px; border-bottom: 2px solid var(--line); }
.kindname { padding-top: 4px; }
.kindicon { display: grid; place-items: center; width: 48px; height: 48px; border: 2px solid var(--rim); border-radius: 5px; background: var(--line); }
.propbody { display: flex; height: 606px; }
.propform { flex: 1; padding: 25px 16px 0 16px; }
.propscroll { width: 30px; height: 554px; margin-top: 2px; background: #4b4b4b; }
.dims { display: grid; grid-template-columns: 36px 122px 87px 30px 122px; align-items: center; height: 32px; margin-bottom: 30px; }
.dims.pos { grid-template-columns: 36px 122px 87px 27px 122px; }
.dims label { padding-right: 9px; text-align: right; }
.dims .link { margin-left: 28px; }
.num { width: 100%; height: 32px; padding: 0 6px; border: 2px solid var(--rim); background: var(--field); color: var(--ink); }
.num.focus { border-color: #215fb4; background: linear-gradient(#dcdcdc, #dcdcdc) 4px 2px / 38px 24px no-repeat var(--field); color: #000; }
.propform hr { margin: -2px -8px 18px -8px; border: 0; border-top: 2px solid var(--line); }
.lbl { display: block; margin-bottom: 9px; }
.second { margin-top: 17px; }
.bgrow { display: grid; grid-template-columns: 34px 1fr; gap: 16px; align-items: center; }
.white { height: 34px; background: #fff; border: 2px solid var(--line); }
.propform .select { color: var(--ink); }
.resize { display: flex; justify-content: center; height: 16px; border-top: 4px solid var(--line); }

.right { display: flex; flex-direction: column; width: 820px; flex: none; }
.rightrow { display: flex; flex: 1; min-height: 0; }
.dock { width: 74px; flex: none; background: var(--panel); }
.dgroup { display: flex; flex-direction: column; align-items: center; height: 82px; padding-top: 6px; border-bottom: 2px solid var(--line); }
.dgroup.tall, .dgroup.mid { height: 138px; }
.dgroup.low { height: 83px; }
.dbtn { display: grid; place-items: center; width: 58px; height: 50px; margin-top: 7px; flex: none; padding: 0; border: 2px solid transparent; border-radius: 4px; background: none; color: var(--icon); }
.dbtn.active { background: var(--line); border-color: var(--rim); }
.panels { display: flex; flex-direction: column; flex: 1; min-width: 0; }
.panel { background: var(--panel); flex: none; }
.split { height: 6px; flex: none; background: #484848; border: solid var(--line); border-width: 2px 0; }
.colorbody { display: grid; grid-template-columns: 74px 1fr 38px; padding: 14px 32px 36px 16px; }
.pswatch { margin: 6px 0 0 2px; }
.pswatch .bg { grid-area: 2 / 2 / 4 / 4; background: #fff; border: 2px solid var(--line); }
.pswatch .fg { grid-area: 1 / 1 / 3 / 3; background: #414a54; border: 2px solid #fff; margin: 2px; box-shadow: 0 0 0 2px #222, 0 0 0 4px #8c8c8c; }
.field { position: relative; height: 388px; margin-right: 34px; background: linear-gradient(to top, #000, transparent), linear-gradient(to right, #fff, #007aff); }
.marker { position: absolute; left: 19%; top: 69%; width: 24px; height: 24px; margin: -13px; border: 2px solid #fff; border-radius: 50%; }
.hue { position: relative; background: linear-gradient(#f00, #f0f 17%, #00f 33%, #0ff 50%, #0f0 67%, #ff0 83%, #f00); }
.huearrow { position: absolute; left: -20px; top: 142px; width: 18px; height: 22px; }

.searchrow { display: flex; align-items: center; gap: 16px; margin: 30px 24px 0; padding-bottom: 2px; height: 60px; border-bottom: 2px solid var(--rim); color: #fff; }
.searchrow input { flex: 1; min-width: 0; padding: 0; border: 0; background: none; outline: 0; font: italic 22px/26px "Liberation Sans", sans-serif; }
.searchrow input::placeholder { color: #858585; opacity: 1; }
.create { gap: 10px; height: 24px; margin: 40px 0 28px 26px; font-size: 23px; line-height: 24px; font-weight: 600; }
.librow { display: flex; height: 206px; overflow: hidden; }
.liblist { display: flex; flex-direction: column; flex: 1; padding: 0 24px; }
.lib { display: flex; align-items: center; height: 68px; flex: none; padding-left: 18px; border-radius: 8px; background: #474747; color: #dedede; font-size: 22px; text-decoration: none; }
.libart { width: 146px; height: 70px; margin: 68px 0 0 245px; }
.libscroll { width: 32px; padding: 6px; background: #4b4b4b; }
.libscroll span { display: block; height: 80px; border-radius: 10px; background: #6a6a6a; }
.libfoot { display: flex; align-items: center; justify-content: space-between; height: 50px; padding: 0 32px; border-top: 2px solid #474747; color: var(--icon); }
.cloud { width: 34px; height: 22px; }
.add { align-items: flex-end; }
.tri { width: 8px; height: 8px; margin-right: -2px; }

.layers { display: flex; flex-direction: column; flex: 1; min-height: 0; }
.lrow { display: flex; align-items: center; flex: none; padding-left: 7px; border-bottom: 2px solid var(--line); }
.filter { height: 64px; padding-top: 10px; }
.blend { height: 56px; }
.locks { height: 60px; padding-bottom: 2px; border-bottom-color: #484848; }
.kind { width: 176px; }
.mag { margin-left: 16px; }
.kind select { padding-left: 40px; }
.kicons { display: flex; gap: 24px; margin-left: 23px; }
.toggle { width: 20px; height: 38px; margin-left: 22px; padding: 0; border: 2px solid var(--rim); border-radius: 10px; background: var(--field); display: flex; align-items: flex-start; justify-content: center; }
.toggle span { width: 16px; height: 16px; border-radius: 50%; background: #dedede; }
.mode { width: 261px; }
.plabel { width: 84px; margin-left: 8px; color: #d6d6d6; }
.pct { display: flex; width: 102px; height: 36px; border: 2px solid var(--rim); border-radius: 5px; background: var(--field); }
.pct input { width: 71px; padding: 0 0 0 6px; border: 0; border-right: 2px solid var(--rim); background: none; }
.pct button { flex: 1; padding: 4px 0 0 6px; border: 0; background: none; }
.locklabel { width: 66px; padding-left: 3px; color: #d6d6d6; }
.lockicons { display: flex; align-items: center; gap: 17px; width: 239px; }
.dim { color: #8c8c8c; }
.plabel.fill { width: 38px; margin-left: 10px; color: #7c7c7c; }
.pct.off { background: none; border-color: #616161; color: #6c6c6c; }
.pct.off input { border-color: #616161; }
.stack { display: flex; flex: 1; min-height: 0; background: var(--panel); }
.layerlist { flex: 1; margin: 0; padding: 0; list-style: none; }
.layer { display: flex; height: 55px; border-bottom: 2px solid #484848; }
.layer.leaf { height: 82px; }
.eye { display: grid; place-items: center; width: 60px; padding: 0 0 0 2px; border: 0; border-right: 2px solid #484848; background: none; color: #dedede; }
.eye svg { width: 26px; height: 16px; }
.lname { display: flex; flex: 1; align-items: center; gap: 16px; padding-left: 6px; }
.group { background: var(--dark); border-color: #424242; font: bold 20px/24px "Noto Sans", sans-serif; }
.group .eye { border-color: #424242; }
.sel .lname { background: #6a6a6a; }
.leaf .lname { padding-left: 40px; }
.thumb { width: 52px; height: 64px; border: 2px solid #282828; background: repeating-conic-gradient(#ccc 0 25%, #fff 0 50%) 0 0 / 8px 8px; }
.stackscroll { width: 30px; background: #4b4b4b; }
.layerfoot { display: flex; align-items: center; justify-content: flex-end; gap: 26px; height: 40px; flex: none; padding: 10px 53px 0 0; border-top: 2px solid var(--line); background: #4b4b4b; }
.fx { width: 28px; justify-content: center; font: italic 26px/28px "Liberation Serif", serif; }
```
